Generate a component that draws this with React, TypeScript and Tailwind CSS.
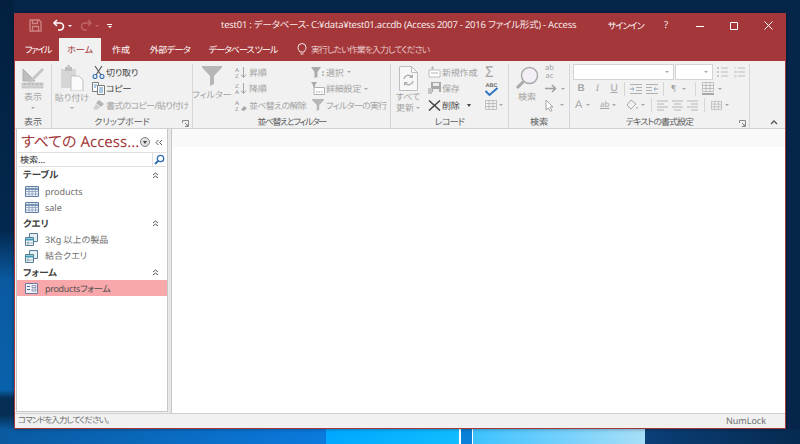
import { ReactNode } from 'react';

const Gray = 'text-[#a3a3a3]';
const Tight = 'tracking-[-0.7px]';

const Chevron = ({ className = '' }: { className?: string }) => (
  <span className={`inline-block w-0 h-0 border-x-[2px] border-x-transparent border-t-[2px] border-t-[#a8a8a8] ${className}`} />
);

const SaveIcon = () => (
  <svg width="13" height="13" viewBox="0 0 13 13" fill="none" stroke="#cf8586" strokeWidth="1.3">
    <path d="M1 1h9l2 2v9H1z" />
    <path d="M3.5 1v3.5h5V1M3.5 12V7.5h6V12" />
  </svg>
);

const UndoIcon = () => (
  <svg width="14" height="13" viewBox="0 0 14 13" fill="none" stroke="#fff" strokeWidth="1.6">
    <path d="M5 1 2 4l3 3" />
    <path d="M2 4h6a3.5 3.5 0 0 1 0 7H6" />
  </svg>
);

const RedoIcon = () => (
  <svg width="14" height="13" viewBox="0 0 14 13" fill="none" stroke="#c06668" strokeWidth="1.4">
    <path d="M9 1l3 3-3 3" />
    <path d="M12 4H6a3.5 3.5 0 0 0 0 7h2" />
  </svg>
);

const ViewIcon = () => (
  <svg width="24" height="24" viewBox="0 0 24 24" fill="none">
    <path d="M2 3 14 15H2z" fill="#bdbdbd" />
    <path d="M2 3v12h12z" stroke="#b0b0b0" />
    <path d="M9 14 21 2l2 2-12 12-3 1z" fill="#c4c4c4" />
    <rect x="1" y="17" width="21" height="5" fill="#d0d0d0" stroke="#b5b5b5" strokeWidth="0.5" />
    <path d="M4 17v2M8 17v2M12 17v2M16 17v2M20 17v2" stroke="#9c9c9c" strokeWidth="0.7" />
  </svg>
);

const PasteIcon = () => (
  <svg width="24" height="26" viewBox="0 0 24 26">
    <path d="M1 4h15v19H1z" fill="#d6d6d6" />
    <path d="M5 2h7v4H5z" fill="#bdbdbd" />
    <path d="M7 0h3v3H7z" fill="#c8c8c8" />
    <path d="M11 11h8l4 4v11H11z" fill="#fafafa" stroke="#c0c0c0" />
  </svg>
);

const ScissorsIcon = () => (
  <svg width="13" height="13" viewBox="0 0 13 13" fill="none">
    <path d="M3 0 9 9M10 0 4 9" stroke="#555" strokeWidth="1.1" />
    <circle cx="3" cy="10.5" r="2" stroke="#2f6db0" strokeWidth="1.1" />
    <circle cx="10" cy="10.5" r="2" stroke="#2f6db0" strokeWidth="1.1" />
  </svg>
);

const CopyIcon = () => (
  <svg width="13" height="13" viewBox="0 0 13 13" fill="#fff" stroke="#6b6b6b" strokeWidth="0.9">
    <path d="M.5.5h6v9h-6z" />
    <path d="M5.5 3.5h7v9h-7z" />
    <path d="M7 6h4M7 8h4M7 10h4M2 3h3M2 5h2" stroke="#3f7fbd" />
  </svg>
);

const BrushIcon = () => (
  <svg width="13" height="13" viewBox="0 0 13 13">
    <path d="M7 1l5 4-3 3-5-4z" fill="#b4b4b4" />
    <path d="M4 5l4 3-3 3-4-1z" fill="#cfcfcf" />
  </svg>
);

const FunnelIcon = ({ size = 20 }: { size?: number }) => (
  <svg width={size} height={size} viewBox="0 0 20 20">
    <path d="M0 0h20v1.5L12 10v8l-4 2V10L0 1.5z" fill="#b6b6b6" />
  </svg>
);

const SortIcon = ({ up, clear }: { up?: boolean; clear?: boolean }) => (
  <svg width="13" height="13" viewBox="0 0 13 13" fill="none">
    <text x="0" y="5.5" fontSize="6" fontFamily="Liberation Sans" fill={up ? '#8a8a8a' : '#a0a0a0'}>{up ? 'A' : 'Z'}</text>
    <text x="0" y="12" fontSize="6" fontFamily="Liberation Sans" fill={up ? '#a0a0a0' : '#8a8a8a'}>{up ? 'Z' : 'A'}</text>
    {clear ? (
      <path d="M6 11l3-4 3 2-3 3z" fill="#a8a8a8" />
    ) : (
      <path d="M8.5 1v10M6 8.5l2.5 3 2.5-3" stroke="#a5a5a5" />
    )}
  </svg>
);

const SelectFilterIcon = () => (
  <svg width="14" height="13" viewBox="0 0 14 13">
    <path d="M0 1h10L6.5 6v5l-3 1V6z" fill="#ababab" />
    <path d="M11 5h2v2h-2zM11 8h2v2h-2z" fill="#c0c0c0" />
  </svg>
);

const AdvFilterIcon = () => (
  <svg width="14" height="13" viewBox="0 0 14 13" fill="none">
    <path d="M0 0h6L4 3v2H2V3z" fill="#ababab" />
    <path d="M3 5.5h10.5v7H3z" stroke="#b0b0b0" fill="#fff" />
    <path d="M5 10h1.5M7.5 10H9M10 10h1.5" stroke="#a0a0a0" />
  </svg>
);

const RefreshIcon = () => (
  <svg width="19" height="25" viewBox="0 0 19 25" fill="none">
    <path d="M.5.5h12l6 6v18H.5z" fill="#f7f7f7" stroke="#bdbdbd" />
    <path d="M12.5.5v6h6" stroke="#bdbdbd" />
    <path d="M5 13a4.5 4.5 0 0 1 8-2M14 15a4.5 4.5 0 0 1-8 2" stroke="#b0b0b0" strokeWidth="1.4" />
    <path d="M14 8v4h-4M5 20v-4h4" fill="#b0b0b0" />
  </svg>
);

const NewIcon = () => (
  <svg width="13" height="12" viewBox="0 0 13 12" fill="none">
    <path d="M1 4h11v7H1z" stroke="#bcbcbc" fill="#fff" />
    <path d="M3 2h3M4.5 .5v3M3 7h7" stroke="#b0b0b0" />
  </svg>
);

const DiskIcon = () => (
  <svg width="13" height="13" viewBox="0 0 13 13">
    <path d="M3 0h10v10H3z" fill="#a8a8a8" />
    <path d="M5 1h6v3H5z" fill="#ededed" />
    <path d="M0 6h4v6H0z" fill="#c4c4c4" />
    <path d="M5 7h6v3H5z" fill="#ededed" />
  </svg>
);

const CrossIcon = () => (
  <svg width="13" height="11" viewBox="0 0 13 11" fill="none" stroke="#444" strokeWidth="1.5">
    <path d="M1 .5l11 10M12 .5 1 10.5" />
  </svg>
);

const SpellIcon = () => (
  <svg width="15" height="16" viewBox="0 0 15 16" fill="none">
    <text x="1.5" y="5.5" fontSize="5.5" fontWeight="700" fontFamily="Liberation Sans" fill="#666">ABC</text>
    <path d="M1.5 10l4 4 8-7" stroke="#2e75c0" strokeWidth="2" />
  </svg>
);

const GridIcon = ({ w = 12, h = 10, color = '#b5b5b5' }: { w?: number; h?: number; color?: string }) => (
  <svg width={w} height={h} viewBox="0 0 12 10" fill="none" stroke={color} strokeWidth="0.8">
    <path d="M.5.5h11v9H.5zM.5 3.5h11M.5 6.5h11M4 .5v9M8 .5v9" />
  </svg>
);

const SearchIcon = () => (
  <svg width="24" height="24" viewBox="0 0 24 24" fill="none">
    <circle cx="14.5" cy="9.5" r="8" fill="#f4eef7" stroke="#a8a8a8" strokeWidth="1.4" />
    <path d="M8.5 15.5 2 22" stroke="#a8a8a8" strokeWidth="3" />
  </svg>
);

const CursorIcon = () => (
  <svg width="10" height="13" viewBox="0 0 10 13" fill="#fff" stroke="#a5a5a5">
    <path d="M1 1v10l2.5-2 2 3.5 1.5-1-2-3.5h3z" />
  </svg>
);

const ArrowIcon = () => (
  <svg width="12" height="9" viewBox="0 0 12 9" fill="none" stroke="#9f9f9f" strokeWidth="1.5">
    <path d="M0 4.5h10M7 1l3.5 3.5L7 8" />
  </svg>
);

const Lines = ({ align = 'left' }: { align?: 'left' | 'center' | 'right' }) => {
  const d = {
    left: 'M0 1h11M0 4h7M0 7h11M0 10h7',
    center: 'M0 1h11M2 4h7M0 7h11M2 10h7',
    right: 'M0 1h11M4 4h7M0 7h11M4 10h7',
  }[align];
  return (
    <svg width="11" height="11" viewBox="0 0 11 11" fill="none" stroke="#b5b5b5">
      <path d={d} />
    </svg>
  );
};

const IndentIcon = ({ flip }: { flip?: boolean }) => (
  <svg width="12" height="10" viewBox="0 0 12 10" fill="none" stroke="#b0b0b0" className={flip ? '-scale-x-100' : ''}>
    <path d="M0 .5h12M6 3.5h6M6 6.5h6M0 9.5h12" />
    <path d="M0 5h4M2.5 3.5 4 5 2.5 6.5" stroke="#8da6bd" />
  </svg>
);

const ListIcon = ({ numbered }: { numbered?: boolean }) => (
  <svg width="11" height="12" viewBox="0 0 11 12" fill="none" stroke="#bdbdbd">
    <path d="M4 2h7M4 6h7M4 10h7" />
    {numbered ? <path d="M1 1v2M.5 5.5h2v1h-2M.5 9.5h2M.5 11h2" strokeWidth="0.7" /> : <path d="M0 2h2M0 6h2M0 10h2" strokeWidth="1.5" />}
  </svg>
);

const TableNavIcon = () => (
  <svg width="14" height="11" viewBox="0 0 14 11" fill="none">
    <path d="M.5.5h13v10H.5z" fill="#e8eef6" stroke="#5f7ea6" />
    <path d="M.5 3h13" stroke="#5f7ea6" strokeWidth="1.6" />
    <path d="M.5 5.5h13M.5 8h13M4 .5v10M7.2 .5v10M10.5 .5v10" stroke="#7f98b8" strokeWidth="0.7" />
  </svg>
);

const QueryNavIcon = () => (
  <svg width="13" height="13" viewBox="0 0 13 13" fill="none">
    <path d="M4.5.5h8v8h-8z" fill="#e4eef4" stroke="#567e96" />
    <path d="M.5 4.5h8v8h-8z" fill="#f3f7fa" stroke="#567e96" />
    <path d="M.5 6.5h8" stroke="#3e9ab8" strokeWidth="2" />
    <path d="M3 8v4M.5 10h8" stroke="#78909c" strokeWidth="0.7" />
  </svg>
);

const FormNavIcon = () => (
  <svg width="13" height="11" viewBox="0 0 13 11" fill="none">
    <path d="M.5.5h12v10H.5z" fill="#f3f3fa" stroke="#6d7a9c" />
    <path d="M2 3.5h3M2 6.5h3" stroke="#4a6a9c" />
    <path d="M7 2.5h4v2H7zM7 6h4v2H7z" stroke="#6d7a9c" strokeWidth="0.7" />
  </svg>
);

const Group = ({ width, label, labelClass = '', launcher, children }: { width: string; label: string; labelClass?: string; launcher?: boolean; children: ReactNode }) => (
  <div className={`${width} flex flex-col shrink-0 border-r border-[#d6d6d6] relative`}>
    <div className="flex flex-1 min-h-0">{children}</div>
    <div className={`h-[13px] pt-[1px] text-center text-[9px] leading-[12px] text-[#5c5c5c] whitespace-nowrap ${labelClass}`}>{label}</div>
    {launcher && (
      <svg width="7" height="7" viewBox="0 0 7 7" fill="none" stroke="#8a8a8a" className="absolute right-[3px] bottom-[1px]">
        <path d="M.5 3V.5H6.5V6.5H3M3 3l3 3M6 4v2H4" />
      </svg>
    )}
  </div>
);

const Item = ({ icon, children, dark, caret }: { icon: ReactNode; children?: ReactNode; dark?: boolean; caret?: boolean }) => (
  <div className={`h-[16.5px] flex items-center gap-[1px] whitespace-nowrap text-[9px] tracking-[-0.2px] ${dark ? 'text-[#444]' : Gray}`}>
    <span className="w-[14px] flex justify-center shrink-0">{icon}</span>
    {children}
    {caret && <Chevron className="ml-[2px]" />}
  </div>
);

const NavSection = ({ title }: { title: string }) => (
  <div className="h-[16px] flex items-center justify-between pl-[6px] pr-[8px] text-[9.5px] font-semibold text-[#404040]">
    <span className="pt-[1px]">{title}</span>
    <svg width="7" height="7" viewBox="0 0 7 7" fill="none" stroke="#555" strokeWidth="1">
      <path d="M1 3 3.5 1 6 3M1 6l2.5-2L6 6" />
    </svg>
  </div>
);

const NavItem = ({ icon, children, selected }: { icon: ReactNode; children: ReactNode; selected?: boolean }) => (
  <div className={`h-[16.3px] flex items-center text-[9px] ${selected ? 'bg-[#f8a7aa] text-[#505050]' : 'text-[#6b6b6b]'}`}>
    <span className="w-[28px] pl-[8px] shrink-0 flex">{icon}</span>
    {children}
  </div>
);

export default function App() {
  return (
    <div className="w-[800px] h-[444px] overflow-hidden pl-[14px] pt-[13px] [font-family:'Noto_Sans','Noto_Sans_CJK_JP',sans-serif] [font-feature-settings:'palt'] [text-rendering:geometricPrecision] [background:linear-gradient(90deg,#0a5aa0_0,#0a7ade_326px,#00a8ff_326px,#12bcff_459px,#fff_459px,#fff_461px,#0a80d8_461px,#0a80d8_472px,#fff_472px,#fff_473px,#3cc2ff_473px,#a8def8_645px,#0a3f78_645px,#062a50_800px)_bottom/100%_15px_no-repeat,linear-gradient(180deg,#03203f_0,#03284f_230px,#0a5aa0_280px,#0a62ac_390px,#062f55_398px,#062f55_415px,#0a5aa0_430px)_left/14px_100%_no-repeat,#05254a]">
      <div className="w-[772px] h-[416px] flex flex-col border border-[#a4373a] border-t-0 bg-[#f1f1f1] shadow-[0_0_4px_rgba(0,0,0,0.4)]">
        {/* title bar */}
        <div className="h-[25px] shrink-0 bg-[#a4373a] flex items-center text-white text-[9.5px] pl-[14px]">
          <SaveIcon />
          <span className="ml-[10px] flex"><UndoIcon /></span>
          <Chevron className="ml-[2px] !border-t-white" />
          <span className="ml-[7px] flex"><RedoIcon /></span>
          <Chevron className="ml-[2px] !border-t-[#c06668]" />
          <span className="ml-[8px] w-[5px] border-t border-white h-[4px] relative">
            <Chevron className="absolute left-[0.5px] top-[1px] !border-t-white" />
          </span>
          <span className="ml-[109px] whitespace-nowrap text-[#f6e9e9] tracking-[-0.25px]">test01 : データベース- C:¥data¥test01.accdb (Access 2007 - 2016 ファイル形式) - Access</span>
          <div className="ml-auto flex items-center">
            <span className="mr-[5px] whitespace-nowrap text-[9px] tracking-[-0.8px]">サインイン</span>
            <span className="w-[34px] flex justify-center">?</span>
            <span className="w-[34px] flex justify-center"><svg width="10" height="10" viewBox="0 0 10 10" stroke="#fff"><path d="M1 5.5h8" /></svg></span>
            <span className="w-[34px] flex justify-center"><svg width="10" height="10" viewBox="0 0 10 10" fill="none" stroke="#fff"><path d="M1.5 1.5h7v7h-7z" /></svg></span>
            <span className="w-[34px] flex justify-center"><svg width="11" height="11" viewBox="0 0 11 11" fill="none" stroke="#fff"><path d="M1.5 1.5l8 8M9.5 1.5l-8 8" /></svg></span>
          </div>
        </div>

        {/* tabs */}
        <div className="h-[23px] shrink-0 bg-[#a4373a] flex items-stretch text-white text-[9px]">
          <div className="w-[44px] pl-[2px] flex items-center justify-center tracking-[-1.2px]">ファイル</div>
          <div className="w-[42px] flex items-center justify-center bg-[#f1f1f1] text-[#a4373a]">ホーム</div>
          <div className="w-[40px] flex items-center justify-center">作成</div>
          <div className="w-[58px] flex items-center justify-center whitespace-nowrap tracking-[-0.5px]">外部データ</div>
          <div className="w-[88px] flex items-center justify-center whitespace-nowrap tracking-[-1px]">データベース ツール</div>
          <div className="flex items-center gap-[4px] ml-[10px] text-[#e6c6c7] whitespace-nowrap tracking-[-1px]">
            <svg width="10" height="13" viewBox="0 0 10 13" fill="none" stroke="#fff" strokeWidth="0.9">
              <path d="M3 9C2 7 1 6.5 1 4.5a4 4 0 0 1 8 0C9 6.5 8 7 7 9zM3.5 11h3" />
            </svg>
            実行したい作業を入力してください
          </div>
        </div>

        {/* ribbon */}
        <div className="h-[68px] shrink-0 flex pt-[3px] border-b border-[#d0d0d0] text-[9px]">
          <Group width="w-[37px]" label="表示">
            <div className={`flex-1 flex flex-col items-center pt-[2px] ${Gray}`}>
              <ViewIcon />
              <span className="leading-[12px] mt-[1px]">表示</span>
              <Chevron className="mt-[4px]" />
            </div>
          </Group>

          <Group width="w-[141px]" label="クリップボード" launcher>
            <div className={`w-[36px] ml-[2px] flex flex-col items-center pt-[1px] ${Gray}`}>
              <PasteIcon />
              <span className="leading-[12px] mt-[1px] whitespace-nowrap">貼り付け</span>
              <Chevron className="mt-[3px]" />
            </div>
            <div className="flex flex-col ml-[1px]">
              <Item icon={<ScissorsIcon />} dark>切り取り</Item>
              <Item icon={<CopyIcon />} dark>コピー</Item>
              <Item icon={<BrushIcon />}><span className={Tight}>書式のコピー/貼り付け</span></Item>
            </div>
          </Group>

          <Group width="w-[198px]" label="並べ替えとフィルター" labelClass="tracking-[-1.4px]">
            <div className={`w-[38px] flex flex-col items-center pt-[2px] ${Gray}`}>
              <FunnelIcon />
              <span className="mt-[3px] leading-[12px] whitespace-nowrap">フィルター</span>
            </div>
            <div className="flex flex-col w-[77px] ml-[3px]">
              <Item icon={<SortIcon up />}>昇順</Item>
              <Item icon={<SortIcon />}>降順</Item>
              <Item icon={<SortIcon up clear />}><span className={Tight}>並べ替えの解除</span></Item>
            </div>
            <div className="flex flex-col">
              <Item icon={<SelectFilterIcon />} caret>選択</Item>
              <Item icon={<AdvFilterIcon />} caret>詳細設定</Item>
              <Item icon={<FunnelIcon size={12} />}><span className={Tight}>フィルターの実行</span></Item>
            </div>
          </Group>

          <Group width="w-[118px]" label="レコード" labelClass="tracking-[-0.7px]">
            <div className={`w-[34px] flex flex-col items-center pt-[2px] ${Gray}`}>
              <RefreshIcon />
              <span className="leading-[11px]">すべて</span>
              <span className="leading-[11px] flex items-center gap-[2px]">更新<Chevron /></span>
            </div>
            <div className="flex flex-col w-[57px] ml-[2px]">
              <Item icon={<NewIcon />}>新規作成</Item>
              <Item icon={<DiskIcon />}>保存</Item>
              <Item icon={<CrossIcon />} dark>削除<span className="ml-[6px] w-0 h-0 border-x-[2px] border-x-transparent border-t-[3px] border-t-[#444]" /></Item>
            </div>
            <div className="flex flex-col">
              <div className="h-[16.5px] flex items-center pl-[1px] text-[15px] leading-none text-[#a5a5a5]">Σ</div>
              <div className="h-[16.5px] flex items-center"><SpellIcon /></div>
              <div className="h-[16.5px] flex items-center gap-[2px] pl-[1px]"><GridIcon /><Chevron /></div>
            </div>
          </Group>

          <Group width="w-[61px]" label="検索">
            <div className={`w-[36px] flex flex-col items-center pt-[2px] ${Gray}`}>
              <SearchIcon />
              <span className="leading-[12px] mt-[1px]">検索</span>
            </div>
            <div className="flex flex-col">
              <div className={`h-[16.5px] flex items-center text-[7.5px] leading-[8px] ${Gray}`}><span className="text-center">ab<br />ac</span></div>
              <div className="h-[16.5px] flex items-center gap-[4px]"><ArrowIcon /><Chevron /></div>
              <div className="h-[16.5px] flex items-center gap-[5px]"><CursorIcon /><Chevron /></div>
            </div>
          </Group>

          <Group width="w-[180px]" label="テキストの書式設定" labelClass="tracking-[-1px]" launcher>
            <div className="flex flex-col pl-[3px]">
              <div className="h-[16.5px] flex items-start gap-[1px]">
                <div className="w-[101px] h-[16px] bg-white border border-[#d4d4d4] flex items-center justify-end pr-[4px]"><Chevron /></div>
                <div className="w-[38px] h-[16px] bg-white border border-[#d4d4d4] flex items-center justify-end pr-[4px]"><Chevron /></div>
                <div className="ml-[3px] flex gap-[6px] pt-[2px]"><ListIcon /><ListIcon numbered /></div>
              </div>
              <div className="h-[16.5px] flex items-center text-[10px] font-bold text-[#a5a5a5]">
                <span className="w-[16px] text-center [font-family:'Liberation_Sans']">B</span>
                <span className="w-[17px] text-center italic font-normal [font-family:'Liberation_Serif']">I</span>
                <span className="w-[16px] text-center underline font-normal [font-family:'Liberation_Sans']">U</span>
                <span className="ml-[2px] border-l border-[#d6d6d6] h-[14px]" />
                <span className="ml-[5px] flex"><IndentIcon /></span>
                <span className="ml-[4px] flex"><IndentIcon flip /></span>
                <span className="ml-[5px] border-l border-[#d6d6d6] h-[14px]" />
                <span className="ml-[7px] flex items-center gap-[6px] font-normal text-[8px]">¶<Chevron /></span>
                <span className="ml-[9px] border-l border-[#d6d6d6] h-[14px]" />
                <span className="ml-[6px] flex items-center gap-[4px]">
                  <span className="flex flex-col gap-[1px]"><GridIcon /><span className="h-[2px] bg-[#a8a8a8]" /></span>
                  <Chevron />
                </span>
              </div>
              <div className="h-[16.5px] flex items-center text-[#a5a5a5]">
                <span className="w-[26px] pl-[2px] flex items-center gap-[4px] text-[11px] [font-family:'Liberation_Sans']">A<Chevron /></span>
                <span className="ml-[1px] w-[25px] flex items-center gap-[3px] text-[8px] underline">ab<Chevron /></span>
                <span className="ml-[1px] w-[24px] flex items-center gap-[3px]">
                  <svg width="12" height="12" viewBox="0 0 12 12" fill="none" stroke="#a8a8a8"><path d="M5 1 1 6l4 4 5-5zM11 8v2" /></svg>
                  <Chevron />
                </span>
                <span className="ml-[1px] border-l border-[#d6d6d6] h-[14px]" />
                <span className="ml-[5px] flex gap-[4px]"><Lines /><Lines align="center" /><Lines align="right" /></span>
                <span className="ml-[6px] border-l border-[#d6d6d6] h-[14px]" />
                <span className="ml-[6px] flex items-center gap-[3px]"><GridIcon w={11} h={11} /><Chevron /></span>
              </div>
            </div>
          </Group>

          <div className="flex-1 flex justify-end items-end pr-[7px] pb-[3px]">
            <svg width="8" height="6" viewBox="0 0 8 6" fill="none" stroke="#555" strokeWidth="1.3"><path d="M1 5l3-3 3 3" /></svg>
          </div>
        </div>

        {/* body */}
        <div className="flex-1 min-h-0 flex pl-[1px]">
          <div className="w-[152px] shrink-0 border border-[#c6c6c6] border-t-0 bg-white flex flex-col mb-[1px]">
            <div className="h-[23px] pt-[3px] flex items-center justify-between pl-[4px] pr-[4px] text-[#a4373a] text-[15px] leading-none whitespace-nowrap">
              <span>すべての Access...</span>
              <span className="flex items-center gap-[5px]">
                <span className="w-[10px] h-[10px] rounded-full border border-[#808080] bg-[#e0e0e0] flex items-center justify-center">
                  <span className="w-0 h-0 border-x-[2px] border-x-transparent border-t-[3px] border-t-[#444]" />
                </span>
                <svg width="8" height="7" viewBox="0 0 8 7" fill="none" stroke="#555"><path d="M3.5 1 1 3.5 3.5 6M7 1 4.5 3.5 7 6" /></svg>
              </span>
            </div>
            <div className="h-[15px] mx-[1px] border-y border-[#e0e0e0] flex items-center justify-between pl-[2px] text-[9px] text-[#333]">
              <span>検索...</span>
              <span className="w-[14px] h-full border-l border-[#e0e0e0] flex items-center justify-center">
                <svg width="11" height="11" viewBox="0 0 11 11" fill="none" stroke="#2f6db0" strokeWidth="1.3"><circle cx="6.5" cy="4.5" r="3.2" /><path d="M4 7 1 10" strokeWidth="1.8" /></svg>
              </span>
            </div>
            <NavSection title="テーブル" />
            <NavItem icon={<TableNavIcon />}><span className="pt-[1px]">products</span></NavItem>
            <NavItem icon={<TableNavIcon />}><span className="pt-[1px]">sale</span></NavItem>
            <NavSection title="クエリ" />
            <NavItem icon={<QueryNavIcon />}>3Kg 以上の製品</NavItem>
            <NavItem icon={<QueryNavIcon />}>結合クエリ</NavItem>
            <NavSection title="フォーム" />
            <NavItem icon={<FormNavIcon />} selected><span className="tracking-[-0.3px]">productsフォーム</span></NavItem>
          </div>
          <div className="w-[4px] shrink-0 bg-[#e8e8e8] border-r border-[#c6c6c6]" />
          <div className="flex-1 flex flex-col bg-white">
            <div className="h-[18px] shrink-0 bg-[#f9f9f9]" />
          </div>
        </div>

        {/* status bar */}
        <div className="h-[15px] shrink-0 bg-[#f1f1f1] border-t border-[#d0d0d0] flex items-center justify-between pl-[3px] pr-[19px] text-[8.5px] text-[#6b6b6b]">
          <span className="tracking-[-0.9px]">コマンドを入力してください。</span>
          <span className="text-[9px]">NumLock</span>
        </div>
      </div>
    </div>
  );
}
